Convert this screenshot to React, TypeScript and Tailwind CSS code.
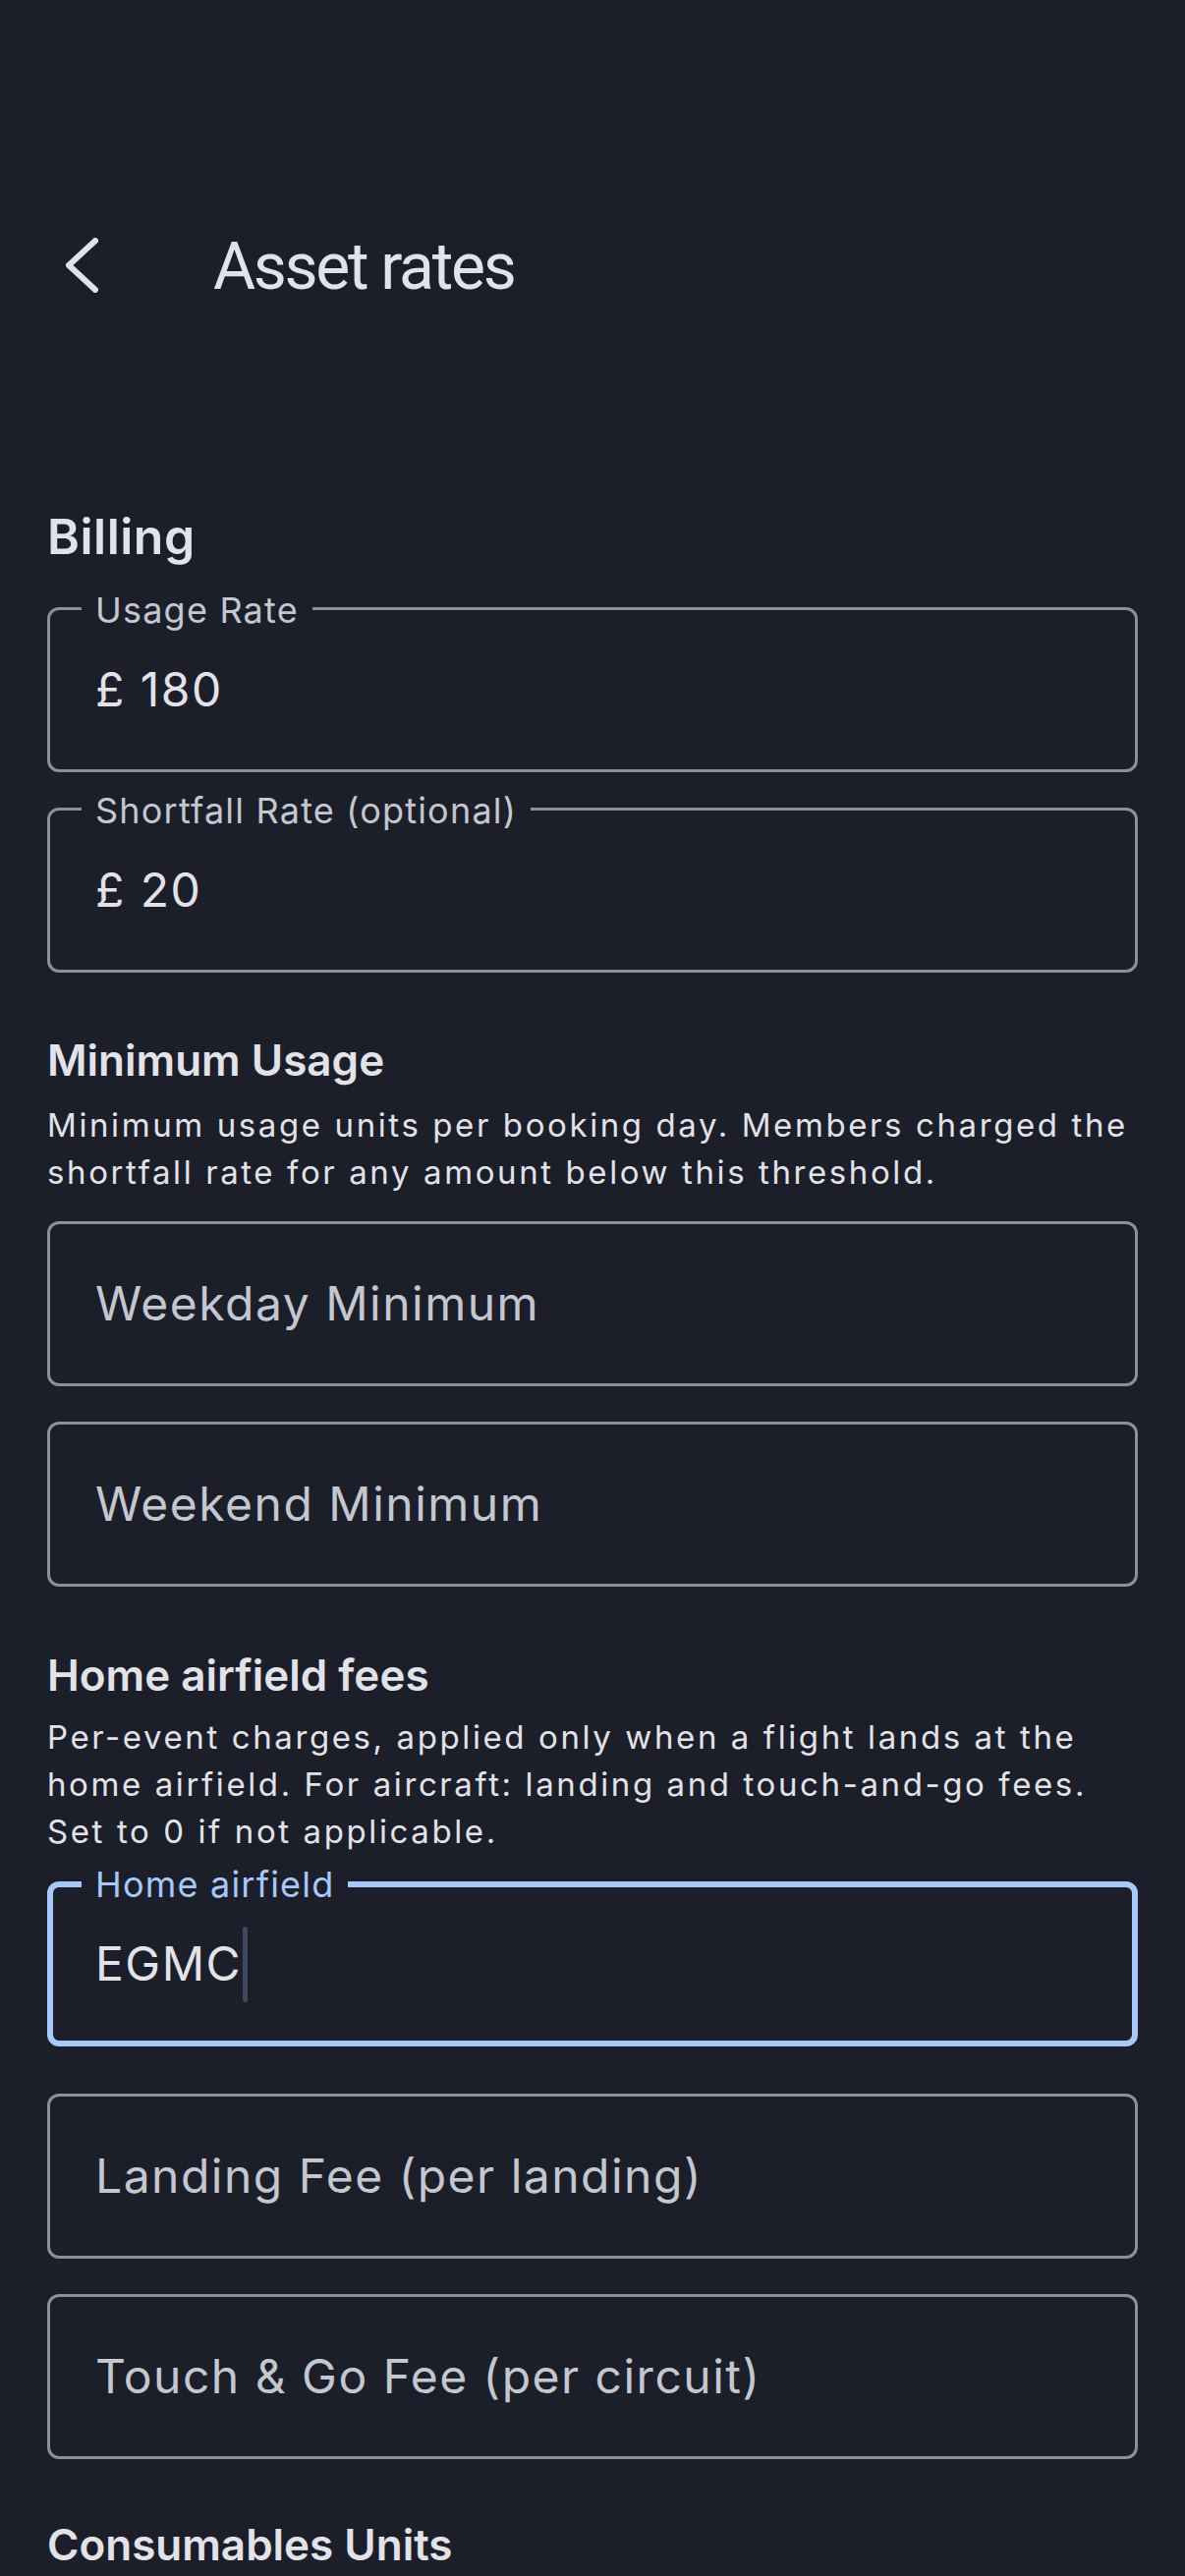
import React from "react";

const FONT = { fontFamily: "Inter, 'Noto Sans', sans-serif" };

function Field({
  label,
  value,
  placeholder,
  focused,
  className = "",
}: {
  label?: string;
  value?: string;
  placeholder?: string;
  focused?: boolean;
  className?: string;
}) {
  const hasLabel = !!label;
  return (
    <div
      className={
        "relative flex h-[168px] items-center rounded-[12px] " +
        (focused
          ? "border-[6px] border-[#a8c7fa] pl-[43px] "
          : "border-[3px] border-[#8e9099] pl-[46px] ") +
        className
      }
    >
      {hasLabel && (
        <span
          className={
            "absolute bg-[#1c1f2a] px-[14px] text-[36px] leading-[36px] tracking-[1.2px] whitespace-nowrap " +
            (focused
              ? "left-[29px] top-[-21px] text-[#a8c7fa]"
              : "left-[32px] top-[-18px] text-[#c4c6d0]")
          }
        >
          {label}
        </span>
      )}
      {value !== undefined ? (
        <span className="flex items-center text-[48px] leading-none tracking-[1.5px] text-[#e2e2e9]">
          {value}
          {focused && (
            <span className="ml-[1px] inline-block h-[77px] w-[5px] rounded-full bg-[#3f4a5e]" />
          )}
        </span>
      ) : (
        <span className="text-[48px] leading-none tracking-[1.5px] text-[#c4c6d0]">
          {placeholder}
        </span>
      )}
    </div>
  );
}

function Heading({ children, className = "" }: { children: React.ReactNode; className?: string }) {
  return (
    <h2 className={"font-semibold leading-[64px] text-[#e2e2e9] " + className}>
      {children}
    </h2>
  );
}

function Desc({ children, className = "" }: { children: React.ReactNode; className?: string }) {
  return (
    <p className={"text-[33px] leading-[48px] tracking-[2.6px] text-[#e2e2e9] " + className}>
      {children}
    </p>
  );
}

export default function App() {
  return (
    <div
      className="h-[2622px] w-full overflow-hidden bg-[#1c1f2a] pt-[204px]"
      style={FONT}
    >
      <header className="flex h-[132px] items-center pl-[64px]">
        <svg width="36" height="56" viewBox="0 0 36 56" fill="none">
          <path
            d="M33 3 L6 28 L33 53"
            stroke="#e2e2e9"
            strokeWidth="6"
            strokeLinecap="round"
            strokeLinejoin="round"
          />
        </svg>
        <h1 className="ml-[117px] mt-[3px] font-['Roboto',sans-serif] text-[66px] font-normal leading-none tracking-[-2.3px] text-[#e2e2e9]">
          Asset rates
        </h1>
      </header>

      <main className="px-[48px]">
        <Heading className="mt-[178px] text-[50px] tracking-[0.5px]">Billing</Heading>
        <Field className="mt-[40px]" label="Usage Rate" value="£ 180" />
        <Field className="mt-[36px]" label="Shortfall Rate (optional)" value="£ 20" />

        <Heading className="mt-[57px] text-[44px]">Minimum Usage</Heading>
        <Desc className="mt-[10px]">
          Minimum usage units per booking day. Members charged the shortfall rate for any
          amount below this threshold.
        </Desc>
        <Field className="mt-[26px]" placeholder="Weekday Minimum" />
        <Field className="mt-[36px]" placeholder="Weekend Minimum" />

        <Heading className="mt-[58px] text-[44px]">Home airfield fees</Heading>
        <Desc className="mt-[7px]">
          Per-event charges, applied only when a flight lands at the home airfield. For
          aircraft: landing and touch-and-go fees. Set to 0 if not applicable.
        </Desc>
        <Field className="mt-[27px]" label="Home airfield" value="EGMC" focused />
        <Field className="mt-[48px]" placeholder="Landing Fee (per landing)" />
        <Field className="mt-[36px]" placeholder="Touch & Go Fee (per circuit)" />

        <Heading className="mt-[55px] text-[44px]">Consumables Units</Heading>
      </main>
    </div>
  );
}
